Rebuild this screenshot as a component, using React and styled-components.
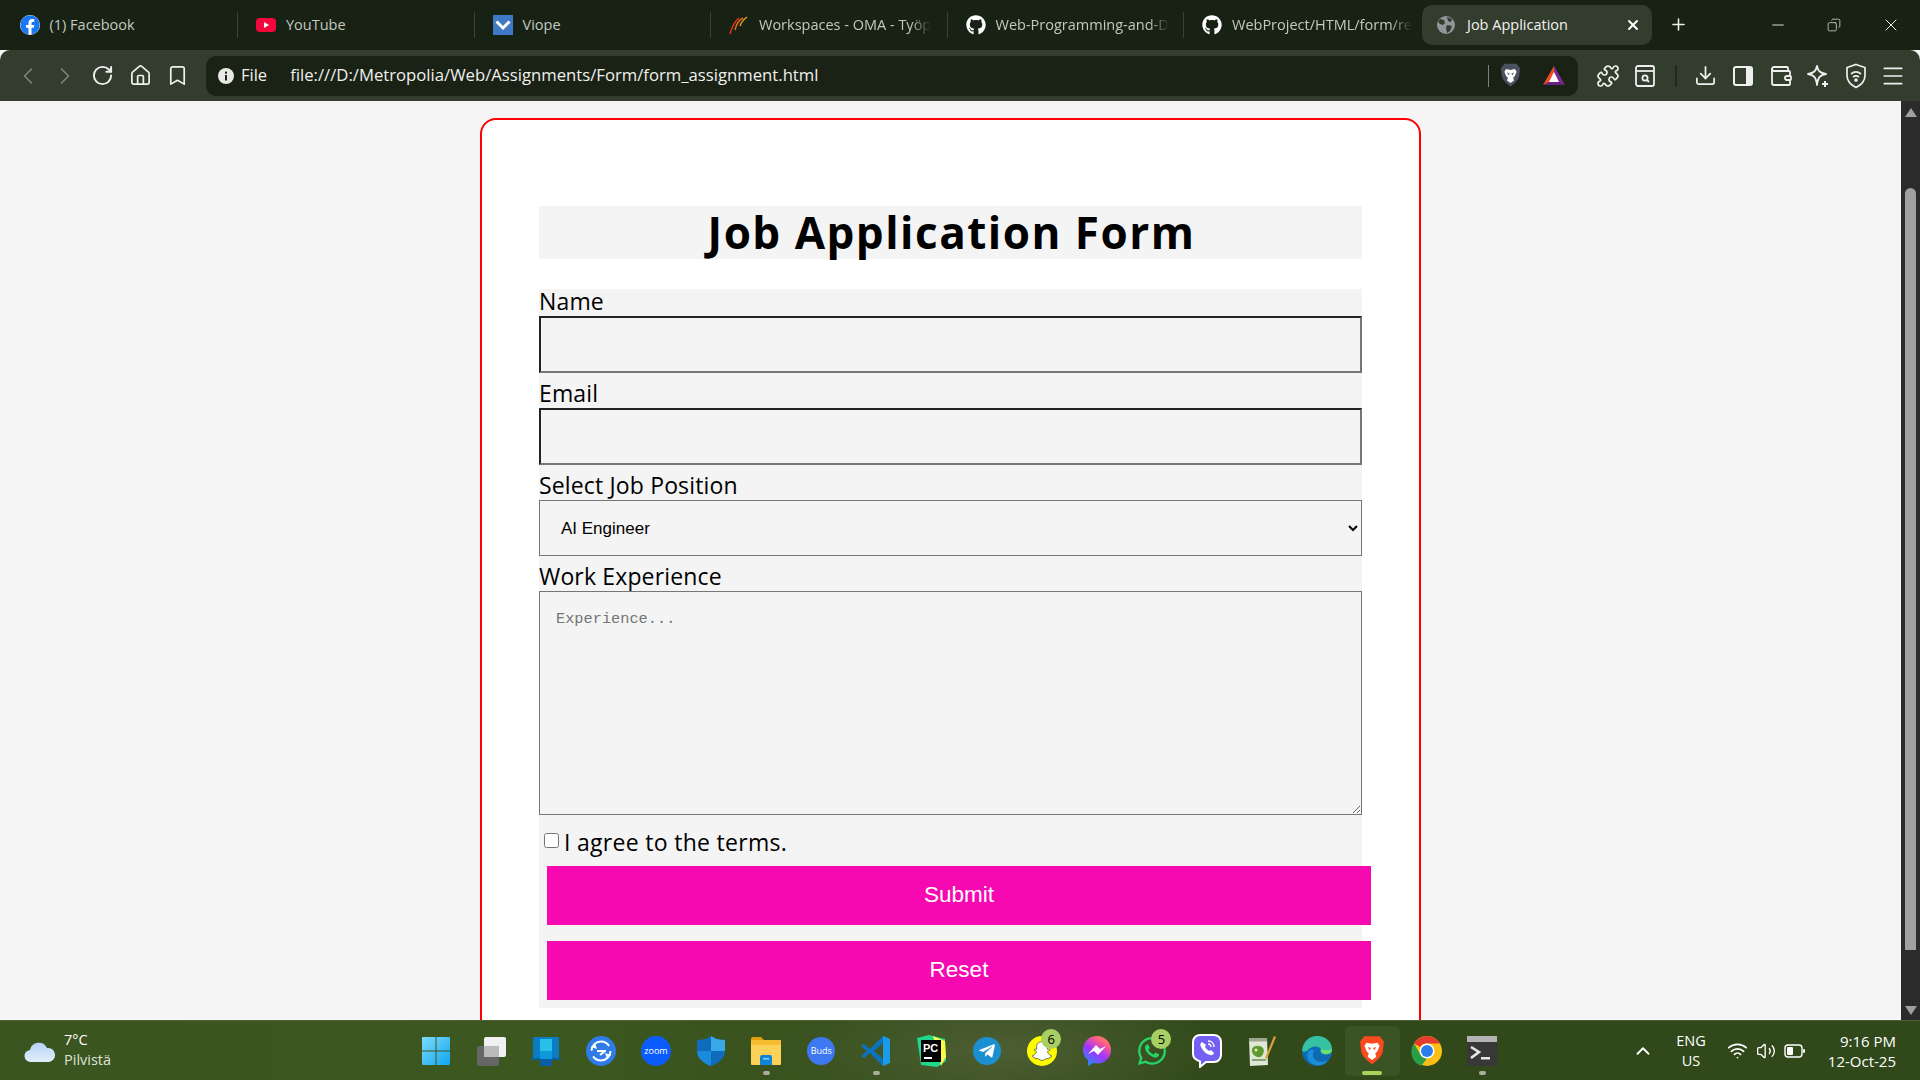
import React from "react";
import styled, { createGlobalStyle } from "styled-components";
import {
  ChevronLeft,
  ChevronRight,
  RotateCw,
  House,
  Bookmark,
  Puzzle,
  Download,
  Wallet,
  Menu,
  X,
  Plus,
  Minus,
  Copy,
  ChevronUp,
  Wifi,
  Volume2,
} from "lucide-react";
import {
  FaGithub,
  FaFacebook,
  FaTelegramPlane,
  FaSnapchatGhost,
  FaWhatsapp,
} from "react-icons/fa";

const UI_FONT = `"Open Sans", "Noto Sans", sans-serif`;
const FORM_FONT = `"Open Sans", "DejaVu Sans", sans-serif`;

const GlobalStyle = createGlobalStyle`
  html, body {
    margin: 0;
    padding: 0;
    height: 100%;
    overflow: hidden;
  }
  * { box-sizing: border-box; }
`;

function YoutubeIcon() {
  return (
    <svg width="20" height="20" viewBox="0 0 20 20">
      <rect x="0" y="3" width="20" height="14" rx="4" fill="#f2083c" />
      <path d="M8 7l5 3-5 3z" fill="#fff" />
    </svg>
  );
}

function ViopeIcon() {
  return (
    <svg width="20" height="20" viewBox="0 0 20 20">
      <rect width="20" height="20" fill="#3f78c4" />
      <path d="M3.5 6.5L10 13l6.5-6.5" fill="none" stroke="#fff" strokeWidth="3" />
    </svg>
  );
}

function OmaIcon() {
  return (
    <svg width="20" height="20" viewBox="0 0 20 20" fill="none" strokeWidth="1.4">
      <path d="M1 19C3 12 6 6 10 3" stroke="#e8391a" />
      <path d="M6 15C7 10 10 5 14 3" stroke="#f06a1a" />
      <path d="M11 11C12 8 14 5 18 2" stroke="#e8a02a" />
    </svg>
  );
}

function GlobeIcon() {
  return (
    <svg width="18" height="18" viewBox="0 0 18 18">
      <circle cx="9" cy="9" r="9" fill="#8f979b" />
      <path d="M3 3l4 1 1 3-2 2-3-1-2-2zM10 9l5 1-2 5-3 2-1-5zM10 1l5 2-1 3-3-1z" fill="#333d2e" />
    </svg>
  );
}

function InfoIcon() {
  return (
    <svg width="16" height="16" viewBox="0 0 16 16">
      <circle cx="8" cy="8" r="8" fill="#e8e8e4" />
      <rect x="7" y="7" width="2" height="5.5" fill="#1a2216" />
      <rect x="7" y="3.6" width="2" height="2" fill="#1a2216" />
    </svg>
  );
}

function BraveShield({ size = 22, fill = "#fb4a1e", face = "#fff" }) {
  return (
    <svg width={size} height={size * 1.25} viewBox="0 0 24 30">
      <path d="M5 2h14l4 5-1 9c-1 5-6 9-10 12C8 25 3 21 2 16L1 7z" fill={fill} />
      <path d="M7 8l5 1 5-1 2 3-2 5-2 2 1 3-4 3-4-3 1-3-2-2-2-5z" fill={face} />
      <path d="M8 12l3 1-1 2zM16 12l-3 1 1 2z" fill={fill} />
    </svg>
  );
}

function BatIcon() {
  return (
    <svg width="22" height="22" viewBox="0 0 22 20">
      <path d="M11 0L0 19l11-5z" fill="#f04d23" />
      <path d="M11 0l11 19-11-5z" fill="#7c2b8e" />
      <path d="M0 19h22l-11-5z" fill="#682080" />
      <path d="M11 6l5 10H6z" fill="#fff" />
    </svg>
  );
}

function ReaderIcon() {
  return (
    <svg width="22" height="24" viewBox="0 0 22 24" fill="none" stroke="#eee" strokeWidth="1.8">
      <rect x="2" y="2" width="18" height="20" rx="2" />
      <path d="M2 7h18" />
      <circle cx="11" cy="14" r="2.6" />
      <path d="M13 16l2 2" />
    </svg>
  );
}

function SidebarIcon() {
  return (
    <svg width="22" height="22" viewBox="0 0 22 22">
      <rect x="2" y="2" width="18" height="18" rx="2" fill="none" stroke="#eee" strokeWidth="2" />
      <rect x="14" y="2" width="6" height="18" fill="#eee" />
    </svg>
  );
}

function LeoIcon() {
  return (
    <svg width="24" height="24" viewBox="0 0 24 24" fill="none" stroke="#eee" strokeWidth="1.8">
      <path d="M11 2c1 5 3 7 9 8-6 1-8 3-9 11-1-8-3-10-9-11 6-1 8-3 9-8z" strokeLinejoin="round" />
      <path d="M19 17v6M16 20h6" strokeWidth="2" />
    </svg>
  );
}

function VpnIcon() {
  return (
    <svg width="22" height="26" viewBox="0 0 22 26" fill="none" stroke="#eee" strokeWidth="1.7">
      <path d="M11 1.5l9 3v8c0 6-4 9.5-9 12-5-2.5-9-6-9-12v-8z" />
      <path d="M6 11c3-2.5 7-2.5 10 0M8 14c2-1.5 4-1.5 6 0" />
      <circle cx="11" cy="17" r="1" fill="#eee" />
    </svg>
  );
}

function WindowsIcon() {
  return (
    <svg width="30" height="30" viewBox="0 0 30 30">
      <defs>
        <linearGradient id="winBlue" x1="0" y1="0" x2="1" y2="1">
          <stop offset="0" stopColor="#7fdcfb" />
          <stop offset="1" stopColor="#0ea5ee" />
        </linearGradient>
      </defs>
      <path d="M1 2a1 1 0 011-1h12.5v13.5H1zM15.5 1H28a1 1 0 011 1v12.5H15.5zM1 15.5h13.5V29H2a1 1 0 01-1-1zM15.5 15.5H29V28a1 1 0 01-1 1H15.5z" fill="url(#winBlue)" />
    </svg>
  );
}

function TaskViewIcon() {
  return (
    <svg width="32" height="32" viewBox="0 0 32 32">
      <rect x="2" y="11" width="22" height="20" rx="2" fill="#666" />
      <rect x="9" y="2" width="22" height="20" rx="2" fill="#f1f1f1" />
      <rect x="9" y="11" width="15" height="11" fill="#bbb" />
    </svg>
  );
}

function PhoneLinkIcon() {
  return (
    <svg width="30" height="32" viewBox="0 0 30 32">
      <rect x="2" y="2" width="26" height="22" rx="1" fill="#0a7cc4" />
      <rect x="0" y="23" width="30" height="2" fill="#075f9c" />
      <rect x="9" y="4" width="12" height="27" rx="1" fill="#1098dc" />
      <rect x="9" y="4" width="12" height="12" rx="1" fill="#28bfe8" />
      <rect x="9" y="24" width="12" height="7" fill="#0b5da5" />
    </svg>
  );
}

function SyncIcon() {
  return (
    <svg width="32" height="32" viewBox="0 0 32 32">
      <circle cx="16" cy="16" r="15" fill="#2f7be8" />
      <circle cx="16" cy="16" r="9.5" fill="none" stroke="#fff" strokeWidth="2" strokeDasharray="24 6" />
      <path d="M6 12l6 2-2-6zM26 20l-6-2 2 6z" fill="#fff" />
      <path d="M12 16h9M20 16l-5 4" stroke="#fff" strokeWidth="2" />
    </svg>
  );
}

function DefenderIcon() {
  return (
    <svg width="30" height="32" viewBox="0 0 30 32">
      <path d="M15 1c4 3 9 4 14 4v11c0 7-6 12-14 15C7 28 1 23 1 16V5c5 0 10-1 14-4z" fill="#0f6cbd" />
      <path d="M15 1c4 3 9 4 14 4v11H15z" fill="#38a9e8" />
      <path d="M15 16H1c0 7 6 12 14 15z" fill="#1b8ad8" />
    </svg>
  );
}

function ExplorerIcon() {
  return (
    <svg width="32" height="30" viewBox="0 0 32 30">
      <path d="M1 3a2 2 0 012-2h8l3 3h-13z" fill="#e0a00e" />
      <rect x="1" y="4" width="30" height="25" rx="1" fill="#fbd257" />
      <rect x="1" y="4" width="30" height="5" fill="#f4bc2e" />
      <path d="M10 21a2 2 0 012-2h8a2 2 0 012 2v8H10z" fill="#1284d8" />
      <rect x="13" y="22" width="6" height="1.5" fill="#8ad0f5" />
    </svg>
  );
}

function VsCodeIcon() {
  return (
    <svg width="32" height="32" viewBox="0 0 32 32">
      <path d="M23 1l7 3v24l-7 3z" fill="#1c9ce8" />
      <path d="M23 1L10 14 4 9l-3 2 6 5-6 5 3 2 6-5 13 13v-7l-9-8 9-8z" fill="#0b74c0" />
    </svg>
  );
}

function PyCharmIcon() {
  return (
    <svg width="32" height="34" viewBox="0 0 32 34">
      <path d="M2 4l12-3 16 4 1 22-9 6-16-2z" fill="#21d789" />
      <path d="M18 2l12 5 1 16-5 9z" fill="#fcf84a" />
      <rect x="6" y="6" width="20" height="22" fill="#000" />
      <text x="8" y="18" fill="#fff" fontSize="11" fontWeight="700" fontFamily="Liberation Sans, sans-serif">PC</text>
      <rect x="9" y="23" width="8" height="2" fill="#fff" />
    </svg>
  );
}

function MessengerIcon() {
  return (
    <svg width="30" height="32" viewBox="0 0 30 32">
      <defs>
        <linearGradient id="msgFill" x1="0.2" y1="1" x2="0.8" y2="0">
          <stop offset="0" stopColor="#1f8fff" />
          <stop offset="0.45" stopColor="#a033ff" />
          <stop offset="0.8" stopColor="#ff5c87" />
          <stop offset="1" stopColor="#ff8c5a" />
        </linearGradient>
      </defs>
      <path d="M15 1C7 1 1 7 1 15c0 4 2 8 5 10v6l5-3c1 .3 3 .5 4 .5 8 0 14-6 14-13.5S23 1 15 1z" fill="url(#msgFill)" />
      <path d="M6 19l8-9 4 4 6-3-8 9-4-4z" fill="#fff" />
    </svg>
  );
}

function ViberIcon() {
  return (
    <svg width="30" height="34" viewBox="0 0 30 34">
      <path d="M8 1h14c4 0 7 3 7 7v13c0 4-3 7-7 7h-8l-6 5v-5.5C4 26 1 24 1 20V8c0-4 3-7 7-7z" fill="#7360f2" stroke="#fff" strokeWidth="2" />
      <path d="M10 8c-2 1-2 3-1 5 2 4 5 7 9 8 2 .5 4-.5 4-2l-3-3-2 1c-2-1-3-3-4-4l1-2z" fill="#fff" />
      <path d="M16 7c4 0 6 3 6 6M16 10c2 0 3 1 3 3" fill="none" stroke="#fff" strokeWidth="1.3" />
    </svg>
  );
}

function EdgeIcon() {
  return (
    <svg width="32" height="32" viewBox="0 0 32 32">
      <circle cx="16" cy="16" r="15" fill="#0f6ab4" />
      <path d="M1 16C2 6 9 1 16 1c9 0 15 6 15 13 0 5-5 6-9 5-3-1-3-3-2-5-3-4-10-3-13 1-2 2-4 2-6 1z" fill="#35c1a2" />
      <path d="M13 16c-3 5 0 11 8 11 2 0 4-1 6-2-3 6-12 7-17 3-4-3-5-9-2-12 2-2 4-2 5 0z" fill="#1a8fd8" />
      <path d="M20 14c3 1 9 2 11 0 0 2-1 5-4 5-4 1-7-1-7-5z" fill="#6ee06a" />
    </svg>
  );
}

function ChromeIcon() {
  return (
    <svg width="32" height="32" viewBox="0 0 32 32">
      <circle cx="16" cy="16" r="15" fill="#fbc013" />
      <path d="M16 1a15 15 0 0113 7.5H16A7.5 7.5 0 009 12L3 8.5A15 15 0 0116 1z" fill="#e33b2e" />
      <path d="M3 8.5l6.5 11a7.5 7.5 0 006.5 4L10 31A15 15 0 013 8.5z" fill="#2a9d47" />
      <circle cx="16" cy="16" r="7.5" fill="#fff" />
      <circle cx="16" cy="16" r="6" fill="#2b7de9" />
    </svg>
  );
}

function NotepadIcon() {
  return (
    <svg width="32" height="32" viewBox="0 0 32 32">
      <path d="M3 4l18-1 1 27-18 1z" fill="#dfe8d4" />
      <rect x="3" y="3" width="18" height="3.5" fill="#9ca58e" />
      <path d="M6 14c2-4 8-4 11-1 2 3 0 8-3 9-4 1-9-3-8-8z" fill="#5c9a30" />
      <circle cx="10" cy="15" r="1.5" fill="#e8f0a0" />
      <path d="M6 25h14" stroke="#8aa070" strokeWidth="2" />
      <path d="M28 1l2 1-9 22-2-1z" fill="#d8a23a" />
    </svg>
  );
}

function TerminalIcon() {
  return (
    <svg width="30" height="30" viewBox="0 0 30 30">
      <rect width="30" height="30" rx="2" fill="#383838" />
      <rect width="30" height="6" fill="#b4b4b4" />
      <path d="M4 11l8 5-8 6" fill="none" stroke="#e8e8e8" strokeWidth="2.6" />
      <rect x="14" y="21" width="9" height="2.5" fill="#e8e8e8" />
    </svg>
  );
}

function CloudIcon() {
  return (
    <svg width="32" height="24" viewBox="0 0 32 24">
      <defs>
        <linearGradient id="cloudFill" x1="0" y1="0" x2="0" y2="1">
          <stop offset="0" stopColor="#b6d3f8" />
          <stop offset="1" stopColor="#e4effc" />
        </linearGradient>
      </defs>
      <path d="M7 23a6 6 0 01-1-12 9 9 0 0117-2 7 7 0 012 14z" fill="url(#cloudFill)" />
    </svg>
  );
}

function BatteryIcon() {
  return (
    <svg width="21" height="14" viewBox="0 0 21 14">
      <rect x="1" y="1" width="17" height="12" rx="3" fill="none" stroke="#fff" strokeWidth="1.4" />
      <rect x="3" y="3" width="6" height="8" rx="1" fill="#fff" />
      <rect x="19" y="5" width="2" height="4" rx="1" fill="#fff" />
    </svg>
  );
}

function App() {
  const tabs = [
    { title: "(1) Facebook", icon: <FaFacebook size={20} color="#1877f2" style={{ background: "#fff", borderRadius: "50%" }} /> },
    { title: "YouTube", icon: <YoutubeIcon /> },
    { title: "Viope", icon: <ViopeIcon /> },
    { title: "Workspaces - OMA - Työp", icon: <OmaIcon />, fade: true },
    { title: "Web-Programming-and-D", icon: <FaGithub size={20} color="#fff" />, fade: true },
    { title: "WebProject/HTML/form/re", icon: <FaGithub size={20} color="#fff" />, fade: true },
  ];

  const taskbarApps = [
    { id: "start", icon: <WindowsIcon /> },
    { id: "taskview", icon: <TaskViewIcon /> },
    { id: "phone", icon: <PhoneLinkIcon /> },
    { id: "sync", icon: <SyncIcon /> },
    { id: "zoom", icon: <RoundApp $bg="#0b5cff" $w={30}>zoom</RoundApp> },
    { id: "defender", icon: <DefenderIcon /> },
    { id: "explorer", icon: <ExplorerIcon />, running: true },
    { id: "buds", icon: <RoundApp $bg="#3d78f0" $w={28}>Buds</RoundApp> },
    { id: "vscode", icon: <VsCodeIcon />, running: true },
    { id: "pycharm", icon: <PyCharmIcon /> },
    { id: "telegram", icon: <RoundApp $bg="#1c8fd0" $w={28}><FaTelegramPlane size={18} color="#fff" /></RoundApp> },
    { id: "snapchat", icon: <RoundApp $bg="#fffc00" $w={30}><FaSnapchatGhost size={20} color="#fff" stroke="#111" strokeWidth={14} /></RoundApp>, badge: 6 },
    { id: "messenger", icon: <MessengerIcon /> },
    { id: "whatsapp", icon: <FaWhatsapp size={32} color="#25d366" />, badge: 5 },
    { id: "viber", icon: <ViberIcon /> },
    { id: "notepad", icon: <NotepadIcon /> },
    { id: "edge", icon: <EdgeIcon /> },
    { id: "brave", icon: <BraveShield size={26} />, active: true },
    { id: "chrome", icon: <ChromeIcon /> },
    { id: "terminal", icon: <TerminalIcon />, running: true },
  ];

  return (
    <Screen>
      <GlobalStyle />
      <TabStrip>
        <TabList>
          {tabs.map((tab, i) => (
            <Tab key={tab.title} $last={i === tabs.length - 1}>
              <TabIcon>{tab.icon}</TabIcon>
              <TabTitle $fade={tab.fade}>{tab.title}</TabTitle>
            </Tab>
          ))}
        </TabList>
        <ActiveTab>
          <TabIcon>
            <GlobeIcon />
          </TabIcon>
          <ActiveTitle>Job Application</ActiveTitle>
          <X size={16} color="#fff" strokeWidth={3} />
        </ActiveTab>
        <NewTab>
          <Plus size={19} color="#eee" strokeWidth={2} />
        </NewTab>
        <WindowControls>
          <WindowButton>
            <Minus size={18} strokeWidth={1.2} />
          </WindowButton>
          <WindowButton>
            <Copy size={14} strokeWidth={1.2} style={{ transform: "scaleX(-1)" }} />
          </WindowButton>
          <WindowButton>
            <X size={20} strokeWidth={1.2} />
          </WindowButton>
        </WindowControls>
      </TabStrip>

      <Toolbar>
        <NavGroup>
          <ToolButton $dim>
            <ChevronLeft size={28} strokeWidth={1.4} />
          </ToolButton>
          <ToolButton $dim>
            <ChevronRight size={28} strokeWidth={1.4} />
          </ToolButton>
          <ToolButton>
            <RotateCw size={23} strokeWidth={2} />
          </ToolButton>
          <ToolButton>
            <House size={23} strokeWidth={1.8} />
          </ToolButton>
          <ToolButton>
            <Bookmark size={23} strokeWidth={1.8} />
          </ToolButton>
        </NavGroup>
        <AddressBar>
          <InfoIcon />
          <SchemeLabel>File</SchemeLabel>
          <UrlText>file:///D:/Metropolia/Web/Assignments/Form/form_assignment.html</UrlText>
          <AddressDivider />
          <AddressIcon>
            <BraveShield size={21} fill="#4c5160" />
          </AddressIcon>
          <AddressIcon>
            <BatIcon />
          </AddressIcon>
        </AddressBar>
        <ActionGroup>
          <ToolButton>
            <Puzzle size={24} strokeWidth={1.7} />
          </ToolButton>
          <ToolButton>
            <ReaderIcon />
          </ToolButton>
          <ToolDivider />
          <ToolButton>
            <Download size={23} strokeWidth={1.8} />
          </ToolButton>
          <ToolButton>
            <SidebarIcon />
          </ToolButton>
          <ToolButton>
            <Wallet size={24} strokeWidth={1.8} />
          </ToolButton>
          <ToolButton>
            <LeoIcon />
          </ToolButton>
          <ToolButton>
            <VpnIcon />
          </ToolButton>
          <ToolButton>
            <Menu size={26} strokeWidth={1.6} />
          </ToolButton>
        </ActionGroup>
      </Toolbar>

      <Viewport>
        <Page>
          <Card>
            <Title>Job Application Form</Title>
            <Form>
              <FieldLabel>Name</FieldLabel>
              <TextInput type="text" />
              <FieldLabel>Email</FieldLabel>
              <TextInput type="email" />
              <FieldLabel>Select Job Position</FieldLabel>
              <Select defaultValue="ai">
                <option value="ai">AI Engineer</option>
              </Select>
              <FieldLabel>Work Experience</FieldLabel>
              <TextArea placeholder="Experience..." />
              <CheckRow>
                <Checkbox type="checkbox" />
                <CheckText>I agree to the terms.</CheckText>
              </CheckRow>
              <ActionButton type="button">Submit</ActionButton>
              <ActionButton type="button">Reset</ActionButton>
            </Form>
          </Card>
        </Page>
        <ScrollTrack>
          <ScrollArrow />
          <ScrollThumb />
          <ScrollArrow $down />
        </ScrollTrack>
      </Viewport>

      <Taskbar>
        <Weather>
          <CloudIcon />
          <WeatherText>
            <span>7°C</span>
            <span>Pilvistä</span>
          </WeatherText>
        </Weather>
        <AppRow>
          {taskbarApps.map((app) => (
            <AppCell key={app.id} $active={app.active}>
              {app.icon}
              {app.badge && <Badge>{app.badge}</Badge>}
              {(app.running || app.active) && <RunDot $active={app.active} />}
            </AppCell>
          ))}
        </AppRow>
        <Tray>
          <ChevronUp size={22} color="#fff" strokeWidth={2} />
          <Lang>
            <span>ENG</span>
            <span>US</span>
          </Lang>
          <TrayIcons>
            <Wifi size={21} color="#fff" strokeWidth={2} />
            <Volume2 size={20} color="#fff" strokeWidth={1.6} />
            <BatteryIcon />
          </TrayIcons>
          <Clock>
            <span>9:16 PM</span>
            <span>12-Oct-25</span>
          </Clock>
        </Tray>
      </Taskbar>
    </Screen>
  );
}

const Screen = styled.div`
  display: flex;
  flex-direction: column;
  height: 1080px;
  overflow: hidden;
  font-family: ${UI_FONT};
  background: #f5f5f5;
`;

const TabStrip = styled.div`
  display: flex;
  align-items: center;
  height: 50px;
  padding-bottom: 1px;
  padding-left: 1.5px;
  background: #182214;
`;

const TabList = styled.div`
  display: flex;
`;

const Tab = styled.div`
  display: flex;
  align-items: center;
  gap: 10px;
  width: 236.5px;
  height: 26px;
  padding: 0 14px 0 18px;
  border-right: 1px solid ${(p) => (p.$last ? "transparent" : "#39432f")};
`;

const TabIcon = styled.span`
  display: flex;
  flex: none;
  align-items: center;
  justify-content: center;
  width: 20px;
`;

const TabTitle = styled.span`
  white-space: nowrap;
  font-size: 14.5px;
  color: #c4c8c0;
  ${(p) =>
    p.$fade &&
    `
    -webkit-mask-image: linear-gradient(90deg, #000 88%, transparent 100%);
    mask-image: linear-gradient(90deg, #000 88%, transparent 100%);
  `}
`;

const ActiveTab = styled.div`
  display: flex;
  align-items: center;
  gap: 11px;
  width: 230px;
  height: 40px;
  margin-left: 1.5px;
  padding: 0 11px 0 14px;
  border-radius: 10px;
  background: #333d2e;
`;

const ActiveTitle = styled.span`
  flex: 1;
  font-size: 14.5px;
  color: #f2f2f0;
`;

const NewTab = styled.span`
  display: flex;
  margin-left: 17px;
`;

const WindowControls = styled.div`
  display: flex;
  margin-left: auto;
  padding-right: 1px;
`;

const WindowButton = styled.span`
  display: flex;
  align-items: center;
  justify-content: center;
  width: 56.5px;
  color: #eee;
`;

const Toolbar = styled.div`
  display: flex;
  align-items: center;
  height: 51px;
  border-radius: 10px 10px 0 0;
  padding: 0 8px;
  background: #333d2e;
`;

const NavGroup = styled.div`
  display: flex;
  flex: none;
  width: 190px;
  margin-right: 7px;
  margin-left: 1px;
`;

const ToolButton = styled.span`
  display: flex;
  flex: none;
  align-items: center;
  justify-content: center;
  width: 37.5px;
  color: ${(p) => (p.$dim ? "#7d857a" : "#f0f0ee")};
`;

const AddressBar = styled.div`
  display: flex;
  flex: none;
  align-items: center;
  width: 1372px;
  height: 40px;
  padding: 0 3px 0 12px;
  border-radius: 10px;
  background: #1a2216;
  color: #f0f0ec;
`;

const SchemeLabel = styled.span`
  margin-left: 7px;
  margin-bottom: 2px;
  font-size: 16.5px;
`;

const UrlText = styled.span`
  margin-left: 23px;
  margin-bottom: 2px;
  font-size: 16.7px;
  white-space: nowrap;
`;

const AddressDivider = styled.span`
  width: 1px;
  height: 22px;
  margin-left: auto;
  background: #7f857b;
`;

const AddressIcon = styled.span`
  display: flex;
  justify-content: center;
  width: 43px;
`;

const ActionGroup = styled.div`
  display: flex;
  align-items: center;
  margin-left: 11px;
`;

const ToolDivider = styled.span`
  width: 2px;
  height: 22px;
  margin: 0 10.5px;
  background: #1f2a1a;
`;

const Viewport = styled.div`
  display: flex;
  flex: 1;
  min-height: 0;
`;

const Page = styled.main`
  flex: 1;
  min-width: 0;
  overflow: hidden;
  padding-top: 17px;
`;

const Card = styled.section`
  width: 941px;
  margin: 0 auto;
  padding: 86px 57px 40px;
  border: 2px solid #ff0000;
  border-radius: 16px;
  background: #ffffff;
`;

const Title = styled.h1`
  margin: 0 0 30px;
  height: 53px;
  padding-left: 2px;
  background: #f4f4f4;
  font-family: ${FORM_FONT};
  font-size: 44px;
  font-weight: 700;
  letter-spacing: 1.5px;
  line-height: 53px;
  text-align: center;
  color: #000;
`;

const Form = styled.form`
  display: flex;
  flex-direction: column;
  padding-bottom: 8px;
  background: #f4f4f4;
`;

const FieldLabel = styled.label`
  display: block;
  height: 27px;
  font-family: ${FORM_FONT};
  font-size: 23px;
  letter-spacing: 0.15px;
  line-height: 25px;
  color: #000;
`;

const TextInput = styled.input`
  display: block;
  height: 57px;
  margin-bottom: 8px;
  border: 2px solid;
  border-color: #222 #767676 #767676 #222;
  background: #f4f4f4;
`;

const Select = styled.select`
  display: block;
  height: 56px;
  margin-bottom: 8px;
  padding-left: 17px;
  border: 1px solid #767676;
  background: #f4f4f4;
  font-family: "Liberation Sans", Arial, sans-serif;
  font-size: 17px;
  color: #000;
`;

const TextArea = styled.textarea`
  display: block;
  height: 224px;
  padding: 18px 16px;
  border: 1px solid #767676;
  background: #f4f4f4;
  font-family: "Liberation Mono", monospace;
  font-size: 15.3px;

  &::placeholder {
    color: #757575;
  }
`;

const CheckRow = styled.div`
  display: flex;
  align-items: center;
  height: 51px;
  padding-top: 2px;
  padding-left: 5px;
`;

const Checkbox = styled.input`
  width: 15px;
  height: 15px;
  margin: -2px 5px 0 0;
`;

const CheckText = styled.span`
  font-family: ${FORM_FONT};
  font-size: 23px;
  letter-spacing: 0.3px;
  color: #000;
`;

const ActionButton = styled.button`
  flex: none;
  width: 824px;
  height: 59px;
  margin-left: 8px;
  padding-bottom: 3px;
  border: none;
  background: #f709b2;
  font-family: "Liberation Sans", Arial, sans-serif;
  font-size: 22.5px;
  color: #fff;

  & + & {
    margin-top: 16px;
  }
`;

const ScrollTrack = styled.div`
  display: flex;
  flex: none;
  flex-direction: column;
  align-items: center;
  width: 19px;
  padding: 7px 0 5px;
  background: #2b2b2b;
`;

const ScrollArrow = styled.span`
  flex: none;
  width: 0;
  height: 0;
  border-right: 6.5px solid transparent;
  border-left: 6.5px solid transparent;
  ${(p) =>
    p.$down
      ? "margin-top: auto; border-top: 9px solid #a0a0a0;"
      : "border-bottom: 9px solid #a0a0a0;"}
`;

const ScrollThumb = styled.span`
  flex: none;
  width: 11px;
  height: 762px;
  margin-top: 71px;
  border-radius: 6px 6px 0 0;
  background: #a0a0a0;
`;

const Taskbar = styled.footer`
  display: grid;
  flex: none;
  grid-template-columns: 1fr auto 1fr;
  align-items: center;
  height: 60px;
  border-top: 1px solid #4d5f38;
  background:
    radial-gradient(ellipse 220px 70px at 1000px 50%, #4d5e33 0%, rgba(77, 94, 51, 0) 100%),
    linear-gradient(90deg, #3b5520 0%, #3d5720 30%, #324a1a 60%, #30481a 100%);
  color: #fff;
`;

const Weather = styled.div`
  display: flex;
  align-items: center;
  gap: 8px;
  padding-left: 24px;
`;

const WeatherText = styled.div`
  display: flex;
  flex-direction: column;
  padding-bottom: 2px;
  font-size: 14.5px;
  line-height: 20px;

  span:last-child {
    color: #dfe3d8;
  }
`;

const AppRow = styled.div`
  display: flex;
  margin-right: 2px;
`;

const AppCell = styled.div`
  position: relative;
  display: flex;
  align-items: center;
  justify-content: center;
  width: 55.1px;
  height: 50px;
  border-radius: 5px;
  background: ${(p) => (p.$active ? "rgba(255, 255, 255, 0.05)" : "transparent")};
`;

const RoundApp = styled.span`
  display: flex;
  align-items: center;
  justify-content: center;
  width: ${(p) => p.$w}px;
  height: ${(p) => p.$w}px;
  border-radius: 50%;
  background: ${(p) => p.$bg};
  font-size: 9px;
  color: #fff;
`;

const Badge = styled.span`
  position: absolute;
  top: 3px;
  right: 8px;
  width: 20px;
  height: 20px;
  border-radius: 50%;
  background: #a8cf63;
  font-size: 13px;
  line-height: 20px;
  text-align: center;
  color: #000;
`;

const RunDot = styled.span`
  position: absolute;
  bottom: 1px;
  left: 50%;
  width: ${(p) => (p.$active ? 20 : 7)}px;
  height: 4px;
  margin-left: ${(p) => (p.$active ? -10 : -3.5)}px;
  border-radius: 2px;
  background: ${(p) => (p.$active ? "#a8d45c" : "#a8ad9f")};
`;

const Tray = styled.div`
  display: flex;
  align-items: center;
  justify-content: flex-end;
  padding-right: 24px;
  font-size: 15px;
`;

const Lang = styled.div`
  display: flex;
  flex-direction: column;
  align-items: center;
  width: 40px;
  margin-left: 17px;
  font-size: 14.5px;
  line-height: 20px;
`;

const TrayIcons = styled.div`
  display: flex;
  align-items: center;
  gap: 8px;
  margin-left: 16px;
`;

const Clock = styled.div`
  display: flex;
  flex-direction: column;
  align-items: flex-end;
  width: 74px;
  margin-left: 17px;
  line-height: 20px;
`;

export default App;
